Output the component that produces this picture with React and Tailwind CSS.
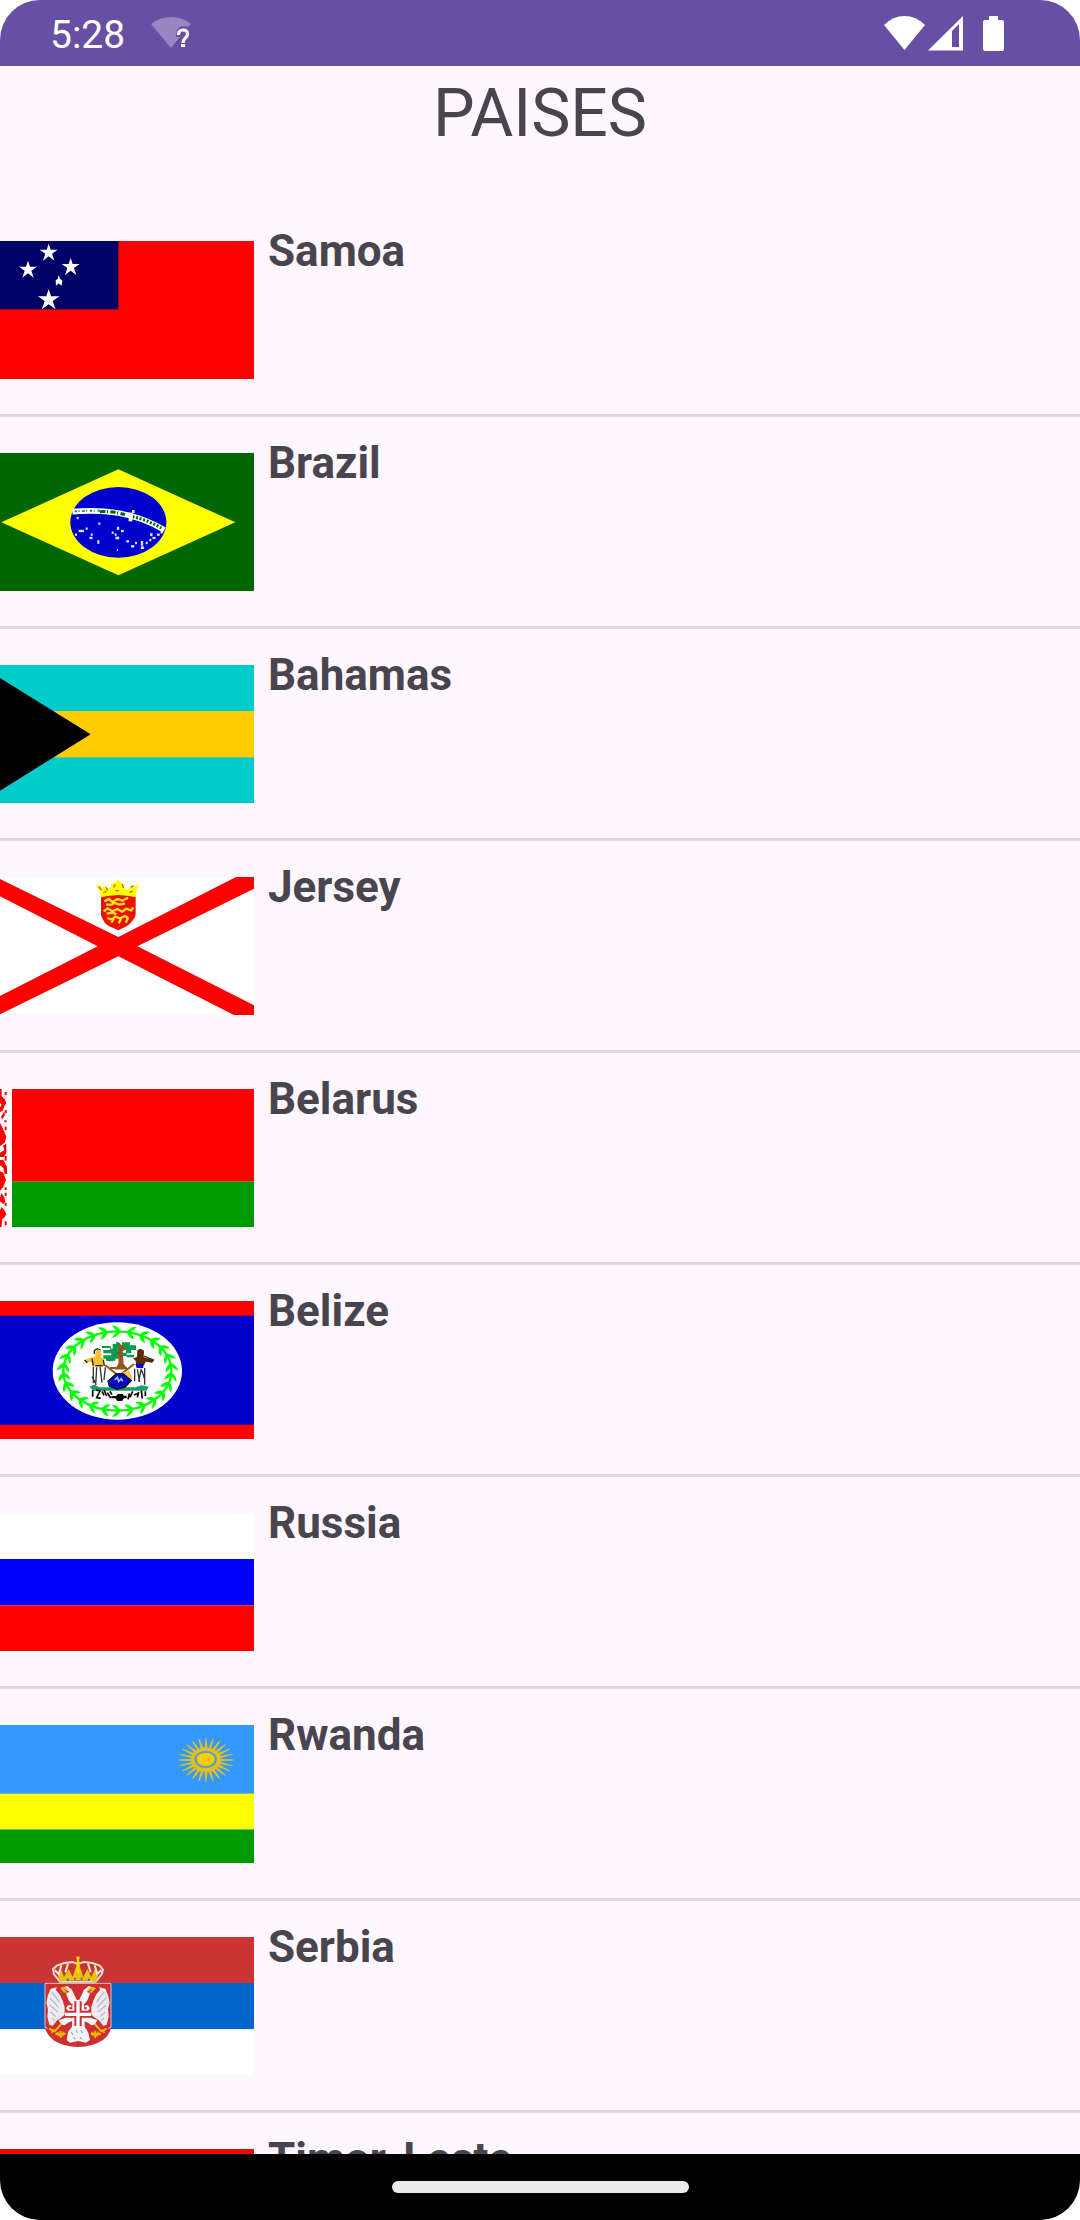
import React from "react";

const STAR = "0,-26 6,-8 27,-8 10,4 17,25 0,12 -17,25 -10,4 -27,-8 -6,-8";

function Star({ x, y, s = 1 }) {
  return <polygon points={STAR} fill="#fff" transform={`translate(${x} ${y}) scale(${s})`} />;
}

function Flag({ name, top = 0, children }) {
  return (
    <svg
      role="img"
      aria-label={`${name} flag`}
      viewBox={`0 ${top} 762 414`}
      className="block h-[138px] w-[254px] shrink-0"
    >
      {children}
    </svg>
  );
}

function Samoa() {
  return (
    <Flag name="Samoa" top={63}>
      <rect y="63" width="762" height="414" fill="#f00" />
      <rect y="63" width="355" height="205" fill="#006" />
      <Star x={146} y={97} />
      <Star x={84} y={148} />
      <Star x={212} y={140} />
      <polygon points="176,165 180,177 187,181 185,197 176,190 168,197 167,181 173,177" fill="#fff" />
      <Star x={146} y={238} s={1.2} />
    </Flag>
  );
}

const BRAZIL_STARS = [
  [233, 234], [298, 251], [260, 266], [244, 273, 16], [228, 284], [275, 284], [273, 294, 9], [295, 306, 6, 11],
  [338, 278], [347, 284], [354, 265, 7, 9], [367, 273, 8], [352, 294, 11, 8], [383, 304, 8], [398, 319, 10],
  [408, 309], [426, 310, 7, 14], [427, 323, 9, 8], [440, 309], [451, 300], [454, 284, 7, 9], [462, 294, 9],
  [475, 284, 8], [485, 277, 7], [352, 330, 3],
];

function Brazil() {
  return (
    <Flag name="Brazil" top={39}>
      <rect y="39" width="762" height="414" fill="#060" />
      <polygon points="4,247 355,88 706,247 355,406" fill="#ff0" />
      <ellipse cx="355" cy="247" rx="144" ry="106" fill="#00c" />
      <path d="M217 215C310 207 400 216 493 270" fill="none" stroke="#fff" strokeWidth="17" />
      <path d="M224 214C240 212 270 213 300 212" fill="none" stroke="#3a7a4a" strokeWidth="6" strokeDasharray="7 5 3 8" />
      <path d="M300 215C325 213 350 217 375 224" fill="none" stroke="#060" strokeWidth="9" strokeDasharray="16 5 3 7" />
      <path d="M398 230C425 236 455 247 484 264" fill="none" stroke="#060" strokeWidth="9" strokeDasharray="6 5" />
      <rect x="386" y="218" width="11" height="26" fill="#fff" />
      <rect x="396" y="210" width="8" height="9" fill="#dfe6ff" />
      {BRAZIL_STARS.map(([x, y, w = 6, h = 7], i) => (
        <rect key={i} x={x - w / 2} y={y - h / 2} width={w} height={h} fill="#e4e4ff" />
      ))}
    </Flag>
  );
}

function Bahamas() {
  return (
    <Flag name="Bahamas" top={75}>
      <rect y="75" width="762" height="414" fill="#0cc" />
      <rect y="213" width="762" height="139" fill="#fc0" />
      <polygon points="0,114 272,283 0,452" fill="#000" />
    </Flag>
  );
}

function Jersey() {
  return (
    <Flag name="Jersey" top={51}>
      <rect y="51" width="762" height="414" fill="#fff" />
      <polygon points="0,57 355,231 708,51 762,51 762,86 412,259 762,436 762,465 702,465 355,289 0,463 0,408 293,259 0,109" fill="#f00" />
      <path d="M303 104h104v58q0 10-8 18q-8 14-22 20l-22 11l-24-11q-16-6-21-19q-7-9-7-19z" fill="#e8140a" />
      <path d="M288 76h12l6 8 10-8 8 12 10-4-2-12 14-4 8-10 8 10 12 4-2 12 12 6 8-14 10 8 6-8h10l-8 14-3 22-19-4-33-3-33 3-19 4-3-20z" fill="#ff0" />
      <path d="M296 80l8 10M318 82l5 10M341 82l5-9M366 72l5 11M392 82l9-5M310 98l9-4M347 92h9M388 98l10-5" stroke="#b86a00" strokeWidth="4" fill="none" />
      <g fill="none" stroke="#f8e020" strokeWidth="7">
        <path d="M313 124l14-7 10 9 16-9 14 5 17-9M318 134h17l9-5 13 5 18-3" />
        <path d="M311 154l12-9 14 9 15-7 14 8 13-9 15 5 6-9M320 161l19-3 10 5" />
        <path d="M322 174l14 5 10-9 13 5 17-7 9 7M334 188l8-12M356 190l7-13M377 188l7-14" />
      </g>
    </Flag>
  );
}

function Belarus() {
  return (
    <Flag name="Belarus" top={57}>
      <rect y="57" width="762" height="414" fill="#fff" />
      <rect x="36" y="57" width="726" height="278" fill="#f00" />
      <rect x="36" y="335" width="726" height="136" fill="#090" />
      <g fill="#f00">
        <path d="M0 57h5v22l9 8 5 13-6 9-4 12-9 6v-15l5-8-5-5zM0 158l8 16 11 26-5 18-14 10zM9 227l10-6v28l-8 12H0v-13l13-8zM0 270h10l11 20v22H14l-4-18-10-8zM0 304l10 4 8 22-8 20-10 13zM0 382l5-13 8 13 3 14-6 6-10-8zM0 420l5-9 8 10 6 11-5 10-8 6-1 23H0z" />
        <path d="M14 66h6v10h-6zM14 120h6v10h-6zM3 140l9-14 3 8-9 15zM13 151h7v6h-7zM14 170h6v10h-6zM14 258h6v14h-6zM14 352h6v8h-6zM14 368h6v10h-6zM14 398h6v9h-6zM14 454h6v12h-6z" />
      </g>
    </Flag>
  );
}

const LEAVES = Array.from({ length: 26 }, (_, i) => {
  const a = (i / 26) * Math.PI * 2 + Math.PI / 2;
  const x = 352 + Math.cos(a) * 162;
  const y = 273 + Math.sin(a) * 119;
  const right = Math.cos(a) > 0;
  const tangent = (Math.atan2(119 * Math.cos(a), -162 * Math.sin(a)) * 180) / Math.PI;
  return { x, y, r: right ? tangent + 180 : tangent };
});

function Belize() {
  return (
    <Flag name="Belize" top={63}>
      <rect y="63" width="762" height="414" fill="#f00" />
      <rect y="107" width="762" height="327" fill="#00c" />
      <ellipse cx="352" cy="273" rx="194" ry="146" fill="#fff" />
      <ellipse cx="352" cy="273" rx="162" ry="119" fill="none" stroke="#0f0" strokeWidth="7" />
      {LEAVES.map(({ x, y, r }, i) => (
        <path
          key={i}
          d="M-16-18Q2-18 10 0Q2 18-16 19Q-10 9 0 1Q-10-8-16-18z"
          fill="#0f0"
          transform={`translate(${x} ${y}) rotate(${r})`}
        />
      ))}
      <path d="M306 198h26v8h6v-14h10v-5h10v12h8v-12h24v9h18v14h-14v10h-16v-10h-16v8h18v10h-24v8h-16v8h-18v-8h-12v-10h24v-6h-24v-10h20v-6h-24z" fill="#0a9a50" />
      <path d="M318 234h28v8h-28zM380 224h22v8h-22z" fill="#0a9a50" />
      <path d="M358 190l4 26 14-12M361 214l-10 8M358 214h8l2 38 12 14h-30l8-16z" fill="#96521e" stroke="#96521e" strokeWidth="5" />
      <path d="M316 256l60 48M402 252l-60 48M330 264h50" stroke="#8a5a20" strokeWidth="6" />
      <path d="M366 278l22-6 10 24-16 6z" fill="#f5c46a" />
      <path d="M286 213l10-4 8 6v17l9 6-2 22h-33l-4-14-16 2-4-8 22-8 10-2z" fill="#f8c030" />
      <path d="M283 222v-11l9-5 10 4M254 240l8 8M310 240l3 18M276 236l4 20M286 257h22" stroke="#222" strokeWidth="4" fill="none" />
      <path d="M412 210l10-4 10 6-1 20 30 8-4 8-20-3-6 12h-22l-2-14-8-8 12-4z" fill="#5c2a08" />
      <path d="M406 252h24v12h-20z" fill="#0000d0" />
      <path d="M432 228l28 12-6 6" stroke="#222" strokeWidth="4" fill="none" />
      <path d="M268 320l14-6 16 8h108l18-6 22 4-6 12h-160z" fill="#1f9a68" />
      <path d="M280 260v50M290 262l-3 54M300 260l6 48M316 262l-4 38M276 290l12 22M404 266v38M412 268l7 38M424 266l-8 38M434 264v50M426 272l8 26" stroke="#303038" strokeWidth="4" fill="none" />
      <path d="M324 304l24-22 20-2 26 22-18 19-24 7-24-9z" fill="#0808c8" stroke="#111" strokeWidth="4" />
      <path d="M344 300l8-8 4 12 8-8 4 8" stroke="#aebbe8" strokeWidth="5" fill="none" />
      <path d="M278 330v20M288 330l12 3-10 20 12 2M306 334l6 12M312 330l8 18M322 338l10 16M330 334l6 10M388 340l-4 18M398 334l-8 18M402 345l10-4M416 336l-4 16M424 332l3 24M436 334v14" stroke="#000" strokeWidth="5" fill="none" />
      <path d="M334 348h14l6-6h14l4 5h8v8h-8l-6 8h-14l-6-8h-12z" fill="#000" />
    </Flag>
  );
}

function Russia() {
  return (
    <Flag name="Russia">
      <rect width="762" height="414" fill="#fff" />
      <rect y="138" width="762" height="139" fill="#00f" />
      <rect y="277" width="762" height="137" fill="#f00" />
    </Flag>
  );
}

const RAYS = Array.from({ length: 24 }, (_, i) => {
  const a = (i / 24) * Math.PI * 2;
  const p = (t, rx, ry) => `${618 + Math.cos(t) * rx},${180 + Math.sin(t) * ry}`;
  return `${p(a - 0.14, 36, 29)} ${p(a - 0.02, 82, 65)} ${p(a + 0.02, 82, 65)} ${p(a + 0.14, 36, 29)}`;
});

function Rwanda() {
  return (
    <Flag name="Rwanda" top={75}>
      <rect y="75" width="762" height="414" fill="#39f" />
      <rect y="281" width="762" height="108" fill="#ff0" />
      <rect y="389" width="762" height="100" fill="#090" />
      {RAYS.map((points) => (
        <polygon key={points} points={points} fill="#e3c01c" />
      ))}
      <ellipse cx="618" cy="179" rx="45" ry="36" fill="#e3c01c" />
      <ellipse cx="617" cy="178" rx="34" ry="26" fill="#5a9dc8" />
      <ellipse cx="617" cy="178" rx="27" ry="20" fill="#fc0" />
    </Flag>
  );
}

function SerbiaHalf() {
  return (
    <g>
      <path d="M232 243l-10-20-6-14-14-11-20 6 12 3 14 8-10 6 8 20 8 10h18z" fill="#f4f4f6" />
      <path d="M180 205l14-4 12 8-12 1 10 8h-12z" fill="#e0b010" />
      <path d="M152 206l18-4-2 8 12 14 8 18 6 20v22l-14 12-8 4-14 18-10-4-6-24 2-22-5-20 4-20z" fill="#ececf0" />
      <path d="M156 216l22 30M150 234l26 28M150 256l24 20M152 276l16 14M156 294l9 9" stroke="#b9bcc6" strokeWidth="4" fill="none" />
      <path d="M204 256h10v6h-6v6h10v5h-14l-6-8zM176 300l14-4 10-6 14 2 4 10-14 6-10 8-10-2z" fill="#f4f4f6" />
      <path d="M148 326l16 8 20-22M166 342h30M182 332v22M172 336l5 12M192 336l-5 12M154 338l10-8" stroke="#f0b800" strokeWidth="6" fill="none" />
    </g>
  );
}

function Serbia() {
  return (
    <Flag name="Serbia" top={51}>
      <rect y="51" width="762" height="138" fill="#c33" />
      <rect y="189" width="762" height="139" fill="#06c" />
      <rect y="328" width="762" height="137" fill="#fff" />
      <path d="M135 190h198v130q-2 24-24 40q-30 20-75 21q-45-1-73-20q-22-16-26-41z" fill="#cf2f32" />
      <path d="M143 325l-8-3V190h198v132l-8 3" fill="none" stroke="#e8bcc8" strokeWidth="3" />
      <SerbiaHalf />
      <g transform="matrix(-1 0 0 1 468 0)">
        <SerbiaHalf />
      </g>
      <path d="M218 240h32l4 40v40l10 16 6 24-12 8-24-5-24 5-10-8 4-24 12-16v-40z" fill="#f4f4f6" />
      <path d="M195 272h78v21h-78zM223 244h22v74h-22z" fill="#cf2f32" />
      <path d="M195 283h78M234 244v74" stroke="#fff" strokeWidth="10" />
      <path d="M213 337l7 7M228 332l5 6M243 332l5 7M221 352l5 6M240 352l5 6" stroke="#aaa" strokeWidth="4" />
      <path d="M180 185l-18-22-3-16 12-10 22-8 24-3 12 4h10l12-4 26 3 22 8 10 12-4 14-18 22z" fill="#c33" stroke="#e6e0c8" strokeWidth="6" />
      <path d="M180 185l-6-16 8-24 10 26 14-24 12 24 10-30 6-30 6 30 10 30 12-24 12 24 12-26 8 24-6 16q-54-8-108 0z" fill="#e8c010" />
      <path d="M229 113h10M234 110v50" stroke="#f8d800" strokeWidth="7" />
      <path d="M164 150l12 12 8-26M304 150l-12 12-8-26M204 131l-8 26M264 131l8 26" stroke="#f2ead0" strokeWidth="6" fill="none" />
      <path d="M200 179h6M222 176h5M242 176h5M264 179h6" stroke="#35766a" strokeWidth="6" />
    </Flag>
  );
}

function TimorLeste() {
  return (
    <Flag name="Timor-Leste">
      <rect width="762" height="414" fill="#f00" />
      <polygon points="0,40 290,207 0,374" fill="#fc0" />
      <polygon points="0,60 190,207 0,354" fill="#000" />
      <Star x={70} y={207} s={2} />
    </Flag>
  );
}

const COUNTRIES = [
  ["Samoa", Samoa],
  ["Brazil", Brazil],
  ["Bahamas", Bahamas],
  ["Jersey", Jersey],
  ["Belarus", Belarus],
  ["Belize", Belize],
  ["Russia", Russia],
  ["Rwanda", Rwanda],
  ["Serbia", Serbia],
  ["Timor-Leste", TimorLeste],
];

function StatusBar() {
  return (
    <div className="flex h-[66px] shrink-0 items-center justify-between bg-[#6750a4] pr-[76px] pl-[50px] text-white">
      <div className="flex items-center gap-[26px]">
        <span className="pt-1 text-[39px] leading-none">5:28</span>
        <svg aria-label="Wi-Fi, no internet" role="img" viewBox="0 0 40 34" className="h-[34px] w-10">
          <path d="M0 8Q9 1 20 1T40 8L37 11Q30 8 26 14L25 21H29L20 32z" fill="#9786c1" />
          <path d="M27.500 19Q27.500 14 32 14T36.500 18C36.500 22 32 22 32 27" fill="none" stroke="#fff" strokeWidth="3.200" />
          <rect x="30" y="28" width="4" height="3" fill="#fff" />
        </svg>
      </div>
      <svg aria-label="Wi-Fi, mobile signal and battery" role="img" viewBox="0 0 120 36" className="h-9 w-[120px]">
        <path d="M0 10Q9 1 20.500 1T41 10L20.500 35z" fill="#fff" />
        <path d="M44 35.500L79 1V35.500zM68 16V32H75V9z" fill="#fff" fillRule="evenodd" />
        <path d="M105 1h9v4h4q2 0 2 2v27q0 2-2 2h-17q-2 0-2-2V7q0-2 2-2h4z" fill="#fff" />
      </svg>
    </div>
  );
}

export default function App() {
  return (
    <div className="h-screen bg-white font-['Roboto',sans-serif] text-[#49454f]">
      <div className="flex h-full flex-col overflow-hidden rounded-[40px] bg-[#fef7ff]">
        <StatusBar />
        <h1 className="h-[139px] shrink-0 pt-[9px] text-center text-[66px] leading-[78px]">PAISES</h1>
        <ul className="min-h-0 flex-1 overflow-hidden">
          {COUNTRIES.map(([name, Art]) => (
            <li key={name} className="flex h-[212px] gap-[14px] border-b-[3px] border-[#dedae0] pt-[36px]">
              <Art />
              <h2 className="-mt-4 text-[44px] leading-[52px] font-bold">{name}</h2>
            </li>
          ))}
        </ul>
        <nav aria-label="System navigation" className="flex h-[66px] shrink-0 items-center justify-center bg-black">
          <button type="button" aria-label="Home" className="h-3 w-[297px] rounded-full bg-[#ebebeb]" />
        </nav>
      </div>
    </div>
  );
}
